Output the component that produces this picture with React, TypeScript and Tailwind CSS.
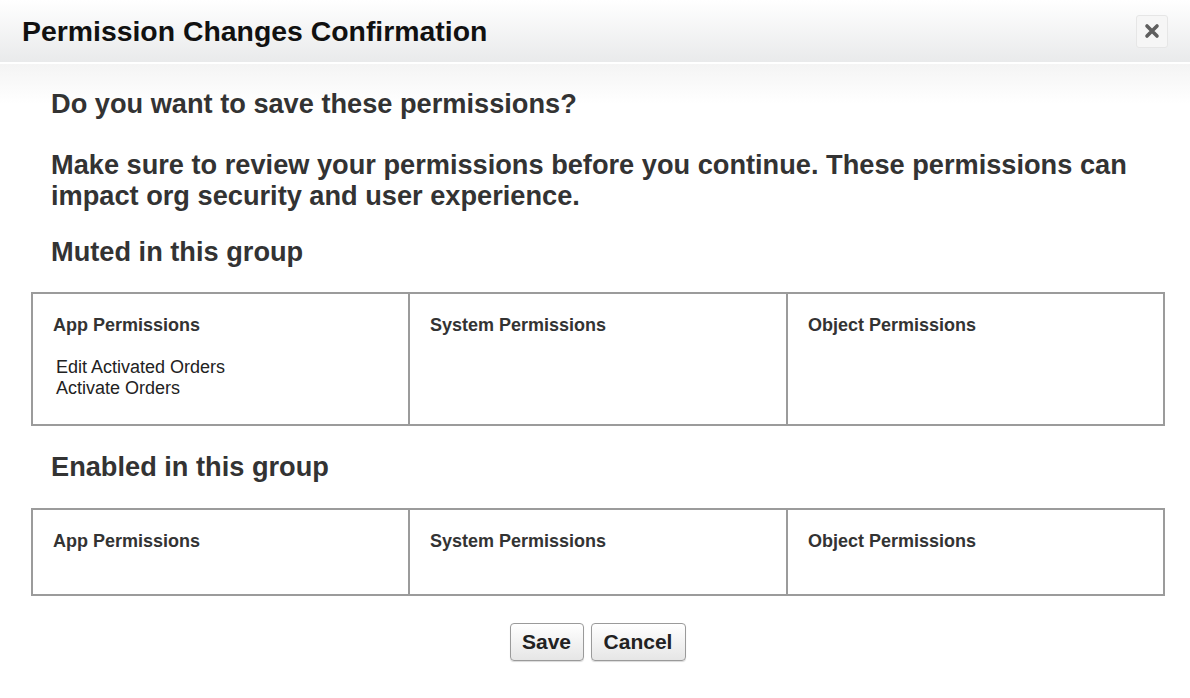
import React from "react";

interface PermissionTableProps {
  app?: string[];
  system?: string[];
  object?: string[];
  height: string;
}

const PermissionTable: React.FC<PermissionTableProps> = ({
  app = [],
  system = [],
  object = [],
  height,
}) => {
  const columns = [
    { title: "App Permissions", items: app },
    { title: "System Permissions", items: system },
    { title: "Object Permissions", items: object },
  ];

  return (
    <div
      className={`ml-[31px] mr-[25px] grid grid-cols-[375px_378px_1fr] border-2 border-[#9b9b9b] ${height}`}
    >
      {columns.map((col, index) => (
        <div
          key={col.title}
          className={`pt-[21px] ${index > 0 ? "border-l-2 border-[#9b9b9b] pl-[20px]" : "pl-5"}`}
        >
          <div className="text-[18px] font-bold leading-5 text-[#333]">{col.title}</div>
          {col.items.length > 0 && (
            <div className="mt-[22px] pl-[3px] text-[18px] leading-[21px] text-[#222]">
              {col.items.map((item) => (
                <div key={item}>{item}</div>
              ))}
            </div>
          )}
        </div>
      ))}
    </div>
  );
};

export default function App() {
  return (
    <div
      className="h-[698px] w-[1190px] overflow-hidden bg-white"
      style={{ fontFamily: '"Liberation Sans", Arial, sans-serif' }}
    >
      {/* Header */}
      <div className="flex h-[64px] items-center justify-between border-b-2 border-white bg-gradient-to-b from-white to-[#e9eaeb] pl-[22px] pr-[22px]">
        <h1 className="text-[28.4px] font-bold text-[#111]">
          Permission Changes Confirmation
        </h1>
        <button className="flex h-[33px] w-[32px] items-center justify-center rounded-[3px] border border-[#e6e6e6] bg-[#f6f6f6] text-[#5f5f5f]">
          <svg width="16" height="16" viewBox="0 0 16 16">
            <path
              d="M3 3 L13 13 M13 3 L3 13"
              stroke="currentColor"
              strokeWidth="3.6"
              strokeLinecap="round"
            />
          </svg>
        </button>
      </div>

      {/* Body */}
      <div className="bg-gradient-to-b from-[#f4f4f4] to-white to-[40px] pt-[25px]">
        <div className="px-[51px] text-[#333]">
          <h2 className="text-[27.2px] font-bold leading-[30px]">
            Do you want to save these permissions?
          </h2>
          <p className="mt-[30px] text-[27.2px] font-bold leading-[31px]">
            Make sure to review your permissions before you continue. These
            permissions can impact org security and user experience.
          </p>
          <h3 className="mt-[26px] text-[27.2px] font-bold leading-[30px]">
            Muted in this group
          </h3>
        </div>

        <div className="mt-[25px]">
          <PermissionTable
            app={["Edit Activated Orders", "Activate Orders"]}
            height="h-[134px]"
          />
        </div>

        <h3 className="mt-[26px] px-[51px] text-[27.2px] font-bold leading-[30px] text-[#333]">
          Enabled in this group
        </h3>

        <div className="mt-[26px]">
          <PermissionTable height="h-[88px]" />
        </div>

        <div className="mt-[27px] flex justify-center gap-[7px] pl-[5px]">
          <button className="h-[38px] w-[74px] rounded-[4px] border border-[#9a9a9a] bg-gradient-to-b from-white to-[#e6e6e6] text-[21px] font-bold text-[#222] shadow-[0_1px_1px_rgba(0,0,0,0.15)]">
            Save
          </button>
          <button className="h-[38px] w-[95px] rounded-[4px] border border-[#9a9a9a] bg-gradient-to-b from-white to-[#e6e6e6] text-[21px] font-bold text-[#222] shadow-[0_1px_1px_rgba(0,0,0,0.15)]">
            Cancel
          </button>
        </div>
      </div>
    </div>
  );
}
